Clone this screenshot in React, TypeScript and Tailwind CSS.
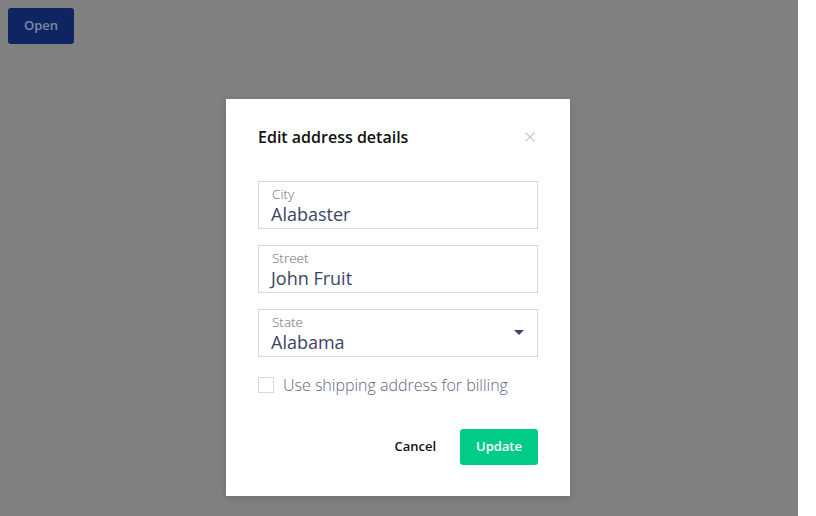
import React from "react";

export default function App() {
  const font = { fontFamily: '"Open Sans", sans-serif' };
  return (
    <div className="flex w-[816px] h-[516px] bg-white" style={font}>
      <div className="relative w-[798px] h-[516px] bg-[#808080]">
        <div className="p-2">
          <button className="w-[66px] h-[36px] rounded-[3px] bg-[#0f2563] text-[13px] font-semibold text-[#7f88a3]">
            Open
          </button>
        </div>
        <div className="absolute left-[226px] top-[99px] w-[344px] h-[397px] bg-white shadow-[0_2px_8px_rgba(0,0,0,0.15)] px-8 pt-[26px]">
          <div className="flex items-center justify-between h-[24px]">
            <h2 className="text-[16px] font-semibold text-[#111] leading-6">Edit address details</h2>
            <svg width="10" height="10" viewBox="0 0 10 10" className="mr-[3px]">
              <path d="M0.5 0.5 L9.5 9.5 M9.5 0.5 L0.5 9.5" stroke="#c4c7d0" strokeWidth="1.2" />
            </svg>
          </div>
          <div className="mt-[32px] flex flex-col gap-4">
            {[
              ["City", "Alabaster", false],
              ["Street", "John Fruit", false],
              ["State", "Alabama", true],
            ].map(([label, value, caret]) => (
              <div
                key={label as string}
                className="relative h-[48px] border border-[#d6d7dc] px-[12px] pt-[3px]"
              >
                <div className="ml-px text-[13.5px] font-light leading-[18px] text-[#6b6b6b]">{label}</div>
                <div className="text-[18px] leading-[22px] text-[#3b4663]">{value}</div>
                {caret && (
                  <svg width="10" height="6" viewBox="0 0 10 6" className="absolute right-[13px] top-[20px]">
                    <path d="M0 0 L10 0 L5 5 Z" fill="#3b4663" />
                  </svg>
                )}
              </div>
            ))}
          </div>
          <div className="mt-[18px] flex items-center gap-[9px]">
            <div className="w-[16px] h-[16px] border border-[#d6d7dc] bg-white" />
            <span className="text-[16px] font-light text-[#5c6784] leading-5">Use shipping address for billing</span>
          </div>
          <div className="mt-[34px] flex items-center justify-end gap-6">
            <button className="text-[13px] font-semibold text-[#111]">Cancel</button>
            <button className="w-[78px] h-[36px] rounded-[3px] bg-[#00cc88] text-[13px] font-semibold text-white">
              Update
            </button>
          </div>
        </div>
      </div>
    </div>
  );
}
